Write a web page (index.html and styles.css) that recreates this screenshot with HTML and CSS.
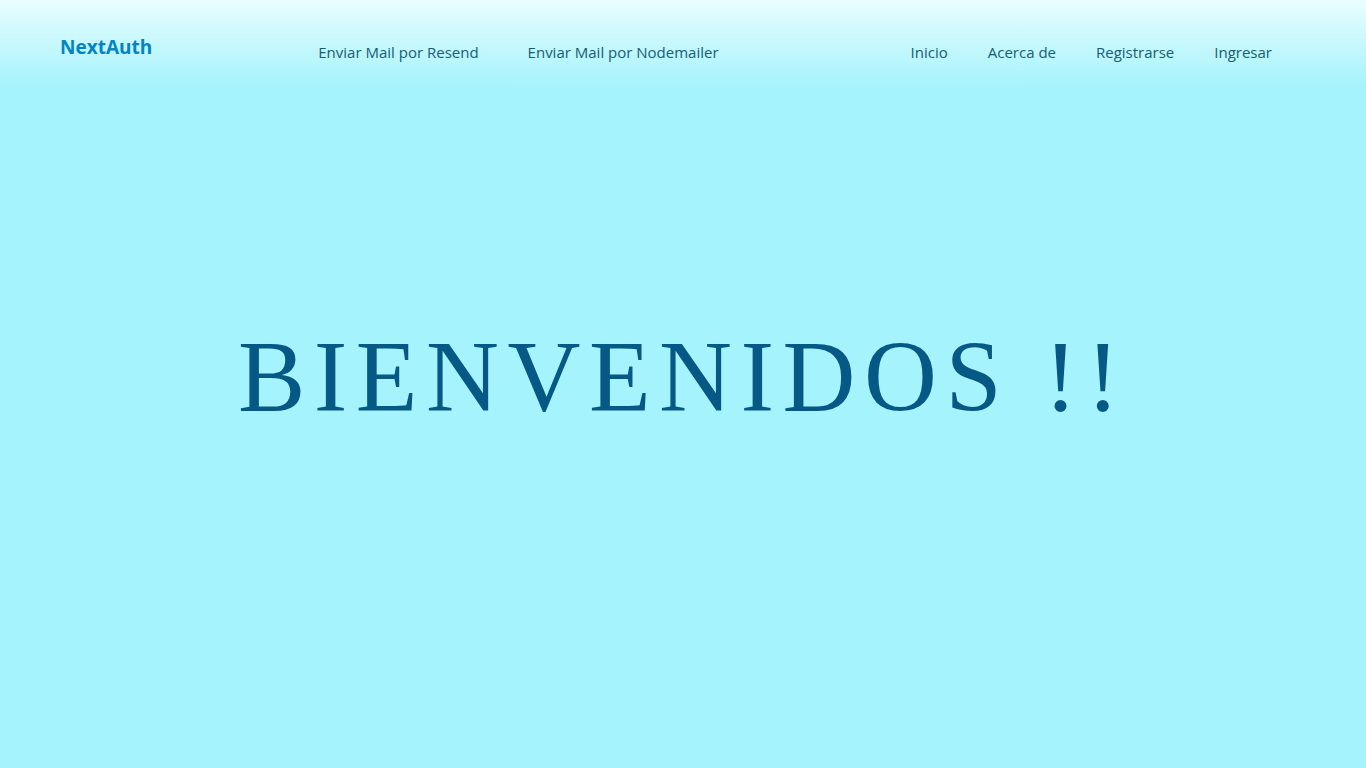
FILE: index.html
```html
<!DOCTYPE html>
<html lang="es">
<head>
<meta charset="utf-8">
<title>NextAuth</title>
<link rel="stylesheet" href="styles.css">
</head>
<body>
<header class="topbar">
  <a class="brand" href="#">NextAuth</a>
  <nav class="group group-mail">
    <a class="link" href="#">Enviar Mail por Resend</a>
    <a class="link" href="#">Enviar Mail por Nodemailer</a>
  </nav>
  <nav class="group">
    <a class="link" href="#">Inicio</a>
    <a class="link" href="#">Acerca de</a>
    <a class="link" href="#">Registrarse</a>
    <a class="link" href="#">Ingresar</a>
  </nav>
</header>
<main class="hero">
  <h1 class="title">BIENVENIDOS !!</h1>
</main>
</body>
</html>
```
FILE: styles.css
```css
* { box-sizing: border-box; }
html, body { margin: 0; padding: 0; }
body {
  background: #a5f3fc;
  font-family: "Open Sans", "Noto Sans", sans-serif;
}
.topbar {
  position: fixed;
  top: 0;
  left: 0;
  right: 0;
  height: 96px;
  display: flex;
  align-items: center;
  justify-content: space-between;
  padding: 0 74px 0 60px;
  background: linear-gradient(to bottom, #e9feff 0%, #c6f8fd 45%, #a5f3fc 92%);
}
.brand {
  color: #0284c7;
  font-weight: 700;
  font-size: 19px;
  text-decoration: none;
  margin-top: -2px;
}
.group {
  display: flex;
  align-items: center;
  margin-top: 8px;
}
.group-mail {
  gap: 9px;
  margin-right: 6px;
}
.link {
  color: #155e75;
  font-size: 15px;
  text-decoration: none;
  padding: 0 20px;
}
.hero {
  min-height: 100vh;
  display: flex;
  align-items: center;
  justify-content: center;
  padding-bottom: 14px;
}
.title {
  margin: 0;
  font-family: "Liberation Serif", "Times New Roman", serif;
  font-weight: 400;
  font-size: 101px;
  line-height: 1;
  letter-spacing: 0.084em;
  color: #075985;
}
```
